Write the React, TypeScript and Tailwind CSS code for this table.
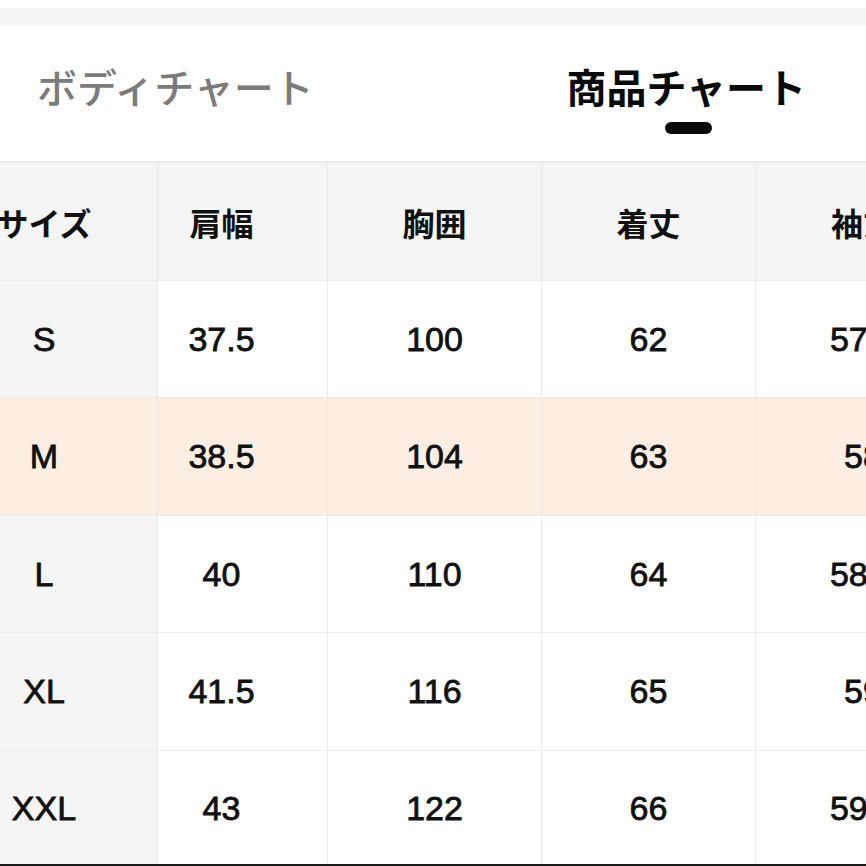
import React from "react";

const jp = "font-['Noto_Sans_CJK_JP',sans-serif]";
const num = "font-['Liberation_Sans','Noto_Sans_CJK_JP',sans-serif]";

type Row = { size: string; vals: string[]; hl?: boolean; h: string };

const rows: Row[] = [
  { size: "S", vals: ["37.5", "100", "62", "57.5"], h: "h-[117px]" },
  { size: "M", vals: ["38.5", "104", "63", "58"], hl: true, h: "h-[118px]" },
  { size: "L", vals: ["40", "110", "64", "58.5"], h: "h-[117px]" },
  { size: "XL", vals: ["41.5", "116", "65", "59"], h: "h-[118px]" },
  { size: "XXL", vals: ["43", "122", "66", "59.5"], h: "h-[114px]" },
];

function Cells({
  first,
  rest,
  hl,
  header,
  h,
  last,
}: {
  first: string;
  rest: string[];
  hl?: boolean;
  header?: boolean;
  h: string;
  last?: boolean;
}) {
  const rowBg = header ? "bg-[#f5f5f5]" : hl ? "bg-[#fdeee3]" : "bg-white";
  const firstBg = header ? "bg-[#f5f5f5]" : hl ? "bg-[#fdeee3]" : "bg-[#f5f5f5]";
  const txt = header
    ? `${jp} text-[32px] font-bold text-[#111] whitespace-nowrap`
    : `${num} text-[34px] text-[#111] [-webkit-text-stroke:0.8px_#111] whitespace-nowrap`;
  const bb = last ? "" : "border-b border-[#ebebeb]";
  return (
    <div className={`flex ${h} ${rowBg} ${bb} w-[970px] shrink-0`}>
      <div
        className={`w-[158px] shrink-0 border-r border-[#ebebeb] ${firstBg} flex items-center justify-center pr-[69px] ${txt}`}
      >
        {first}
      </div>
      <div
        className={`w-[170px] shrink-0 border-r border-[#ebebeb] flex items-center justify-center pr-[42px] ${txt}`}
      >
        {rest[0]}
      </div>
      <div
        className={`w-[214px] shrink-0 border-r border-[#ebebeb] flex items-center justify-center ${txt}`}
      >
        {rest[1]}
      </div>
      <div
        className={`w-[214px] shrink-0 border-r border-[#ebebeb] flex items-center justify-center ${txt}`}
      >
        {rest[2]}
      </div>
      <div className={`w-[214px] shrink-0 flex items-center justify-center ${txt}`}>
        {rest[3]}
      </div>
    </div>
  );
}

export default function App() {
  return (
    <div className="w-[866px] h-[866px] overflow-hidden bg-white flex flex-col">
      <div className="h-2 shrink-0 bg-white" />
      <div className="h-[17px] shrink-0 bg-[#f5f5f5]" />
      <div className="h-[136px] shrink-0 flex items-start">
        <div
          className={`ml-[37px] mt-[41px] text-[40px] leading-[40px] text-[#7b7b7b] font-medium whitespace-nowrap ${jp}`}
        >
          ボディチャート
        </div>
        <div className="ml-auto mr-[60px] mt-[41px] flex flex-col items-center">
          <div
            className={`text-[40px] leading-[40px] text-[#0a0a0a] font-bold whitespace-nowrap ${jp}`}
          >
            商品チャート
          </div>
          <div className="mt-[16px] ml-[4px] w-[47px] h-[12px] rounded-full bg-[#0a0a0a]" />
        </div>
      </div>
      <div className="h-[2px] shrink-0 bg-[#ebebeb]" />
      <div className="flex flex-col overflow-hidden">
        <Cells first="サイズ" rest={["肩幅", "胸囲", "着丈", "袖丈"]} header h="h-[118px]" />
        {rows.map((r, i) => (
          <Cells
            key={r.size}
            first={r.size}
            rest={r.vals}
            hl={r.hl}
            h={r.h}
            last={i === rows.length - 1}
          />
        ))}
      </div>
      <div className="h-[2px] shrink-0 bg-[#1a1a1a]" />
    </div>
  );
}
